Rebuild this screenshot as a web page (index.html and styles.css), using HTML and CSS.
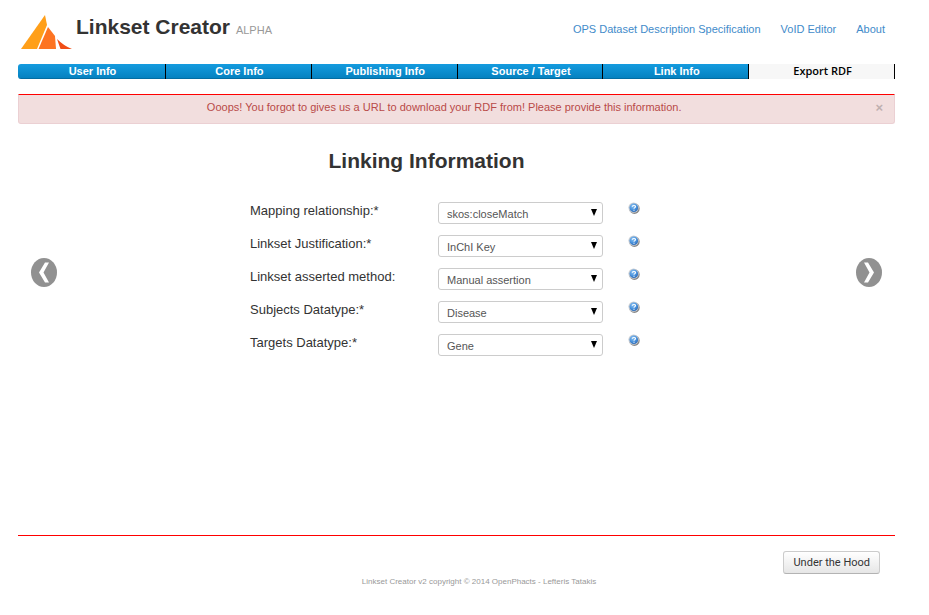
FILE: index.html
```html
<!DOCTYPE html>
<html lang="en">
<head>
<meta charset="utf-8">
<title>Linkset Creator</title>
<link rel="stylesheet" href="styles.css">
</head>
<body>
<svg class="defs" aria-hidden="true">
  <defs>
    <radialGradient id="ball" cx="40%" cy="30%" r="70%">
      <stop offset="0" stop-color="#8cc4f5"/>
      <stop offset="0.6" stop-color="#4a93dd"/>
      <stop offset="1" stop-color="#2f6cb8"/>
    </radialGradient>
    <symbol id="help" viewBox="0 0 12 12">
      <circle cx="6.4" cy="6.6" r="5.3" fill="#888"/>
      <circle cx="5.6" cy="5.6" r="5.2" fill="#c9ced4"/>
      <circle cx="5.8" cy="5.8" r="4.3" fill="url(#ball)"/>
      <path d="M4.2 4.7C4.3 3 7.6 3 7.5 4.7C7.4 5.7 6 5.6 6 6.8M6 7.7V8.7" fill="none" stroke="#fff" stroke-width="1.1"/>
    </symbol>
  </defs>
</svg>
<div class="page">
  <header class="header">
    <div class="brand">
      <svg class="logo" viewBox="0 0 52 36" aria-hidden="true">
        <path d="M0 35L24 1L26 11L16 35Z" fill="#ff9f19"/>
        <path d="M27 13L34 22L35 35H17.500Z" fill="#fd7422"/>
        <path d="M36 25Q43 32 51 35H39.500Z" fill="#f04e17"/>
      </svg>
      <h1 class="title">Linkset Creator <small class="stage">ALPHA</small></h1>
    </div>
    <nav class="links">
      <a href="#spec">OPS Dataset Description Specification</a>
      <a href="#void">VoID Editor</a>
      <a href="#about">About</a>
    </nav>
  </header>
  <nav class="tabs">
    <a class="tab" href="#user">User Info</a>
    <a class="tab" href="#core">Core Info</a>
    <a class="tab" href="#publishing">Publishing Info</a>
    <a class="tab" href="#source">Source / Target</a>
    <a class="tab" href="#link">Link Info</a>
    <a class="tab tab-export" href="#export">Export RDF</a>
  </nav>
  <div class="alert" role="alert">
    <p class="alert-text">Ooops! You forgot to gives us a URL to download your RDF from! Please provide this information.</p>
    <button class="close" type="button" aria-label="Close">×</button>
  </div>
  <main class="stage-area">
    <button class="arrow" type="button" aria-label="Previous">
      <svg viewBox="0 0 26 29"><ellipse cx="13" cy="14.5" rx="13" ry="14.5" fill="#919191"/><path d="M14 4.500H18L12.500 14.500L18 24.500H14L8 14.500Z" fill="#fff"/></svg>
    </button>
    <form class="form">
      <h2 class="heading">Linking Information</h2>
      <div class="row">
        <label for="relationship">Mapping relationship:*</label>
        <span class="picker"><select id="relationship"><option>skos:closeMatch</option></select></span>
        <svg class="help"><use href="#help"/></svg>
      </div>
      <div class="row">
        <label for="justification">Linkset Justification:*</label>
        <span class="picker"><select id="justification"><option>InChI Key</option></select></span>
        <svg class="help"><use href="#help"/></svg>
      </div>
      <div class="row">
        <label for="method">Linkset asserted method:</label>
        <span class="picker"><select id="method"><option>Manual assertion</option></select></span>
        <svg class="help"><use href="#help"/></svg>
      </div>
      <div class="row">
        <label for="subjects">Subjects Datatype:*</label>
        <span class="picker"><select id="subjects"><option>Disease</option></select></span>
        <svg class="help"><use href="#help"/></svg>
      </div>
      <div class="row">
        <label for="targets">Targets Datatype:*</label>
        <span class="picker"><select id="targets"><option>Gene</option></select></span>
        <svg class="help"><use href="#help"/></svg>
      </div>
    </form>
    <button class="arrow" type="button" aria-label="Next">
      <svg viewBox="0 0 26 29"><ellipse cx="13" cy="14.5" rx="13" ry="14.5" fill="#919191"/><path d="M12 4.500H8L13.500 14.500L8 24.500H12L18 14.500Z" fill="#fff"/></svg>
    </button>
  </main>
  <footer class="footer">
    <button class="hood" type="button">Under the Hood</button>
    <p class="copyright">Linkset Creator v2 copyright © 2014 OpenPhacts - Lefteris Tatakis</p>
  </footer>
</div>
</body>
</html>
```
FILE: styles.css
```css
* { box-sizing: border-box; }

body {
  margin: 0;
  background: #fff;
  color: #333;
  font: 11px/16px "Liberation Sans", Arial, sans-serif;
}

a { text-decoration: none; }
h1, h2, p { margin: 0; }
.defs { position: absolute; width: 0; height: 0; }
.page { padding: 0 34px 0 18px; }

.header {
  display: flex;
  justify-content: space-between;
  padding: 14px 10px 0 3px;
  height: 64px;
}
.brand { display: flex; gap: 3px; }
.logo { width: 52px; height: 36px; }
.title { font-size: 21px; line-height: 26px; }
.stage { color: #999; font-size: 11px; font-weight: 400; }
.links { display: flex; gap: 20px; padding-top: 7px; }
.links a { color: #428bca; }

.tabs {
  display: grid;
  grid-template-columns: 148px repeat(5, 1fr);
  border-radius: 3px 0 0 3px;
  overflow: hidden;
}
.tab {
  height: 15px;
  padding-left: 2px;
  border-right: 1px solid #000;
  background: linear-gradient(#149bdf, #0480be);
  box-shadow: inset 0 -1px 0 rgba(0, 0, 0, 0.15);
  color: #fff;
  font-weight: 700;
  line-height: 15px;
  text-align: center;
}
.tab-export {
  background: #f7f7f7;
  box-shadow: none;
  color: #000;
  font-family: "Open Sans", sans-serif;
  font-weight: 600;
  line-height: 14px;
}

.alert {
  display: flex;
  margin-top: 15px;
  padding: 4px 11px 7px;
  border: 1px solid #ebd0d3;
  border-top: 1px solid #f00;
  border-radius: 0 0 3px 3px;
  background: #f2dede;
  color: #b94a48;
}
.alert-text { flex: 1; padding-right: 17px; line-height: 17px; text-align: center; }
.close {
  padding: 0;
  border: 0;
  background: none;
  color: #bfb0b0;
  font: 700 13px/15px "Liberation Sans", Arial, sans-serif;
}

.stage-area {
  display: flex;
  justify-content: space-between;
  align-items: flex-start;
  height: 411px;
  padding: 24px 13px 0;
}
.arrow {
  width: 26px;
  margin-top: 110px;
  padding: 0;
  border: 0;
  background: none;
}
.arrow svg { display: block; width: 26px; height: 29px; }
.form { width: 413px; }
.heading {
  margin-bottom: 28px;
  padding-right: 60px;
  font-size: 21px;
  line-height: 26px;
  text-align: center;
}
.row {
  display: grid;
  grid-template-columns: 188px 165px 12px;
  height: 33px;
}
.row label { font-size: 13px; line-height: 17px; }
.help { width: 12px; height: 12px; margin-left: 25px; }
.picker { position: relative; height: 22px; }
.picker::after {
  content: "";
  position: absolute;
  top: 7px;
  right: 6px;
  border: 3px solid transparent;
  border-top: 7px solid #000;
  border-bottom: 0;
  pointer-events: none;
}
.picker select {
  width: 100%;
  height: 22px;
  padding: 1px 8px 0;
  border: 1px solid #ccc;
  border-radius: 3px;
  background: #fff;
  color: #555;
  font: 11px "Liberation Sans", Arial, sans-serif;
  appearance: none;
}

.footer {
  display: flex;
  flex-direction: column;
  padding: 15px 15px 0;
  border-top: 1px solid #f00;
}
.hood {
  align-self: flex-end;
  height: 23px;
  padding: 0 9px;
  border: 1px solid #ccc;
  border-bottom-color: #b3b3b3;
  border-radius: 3px;
  background: linear-gradient(#fff, #e6e6e6);
  color: #333;
  font: 11px Roboto, sans-serif;
}
.copyright {
  padding-left: 45px;
  color: #999;
  font-size: 8px;
  text-align: center;
}
```
